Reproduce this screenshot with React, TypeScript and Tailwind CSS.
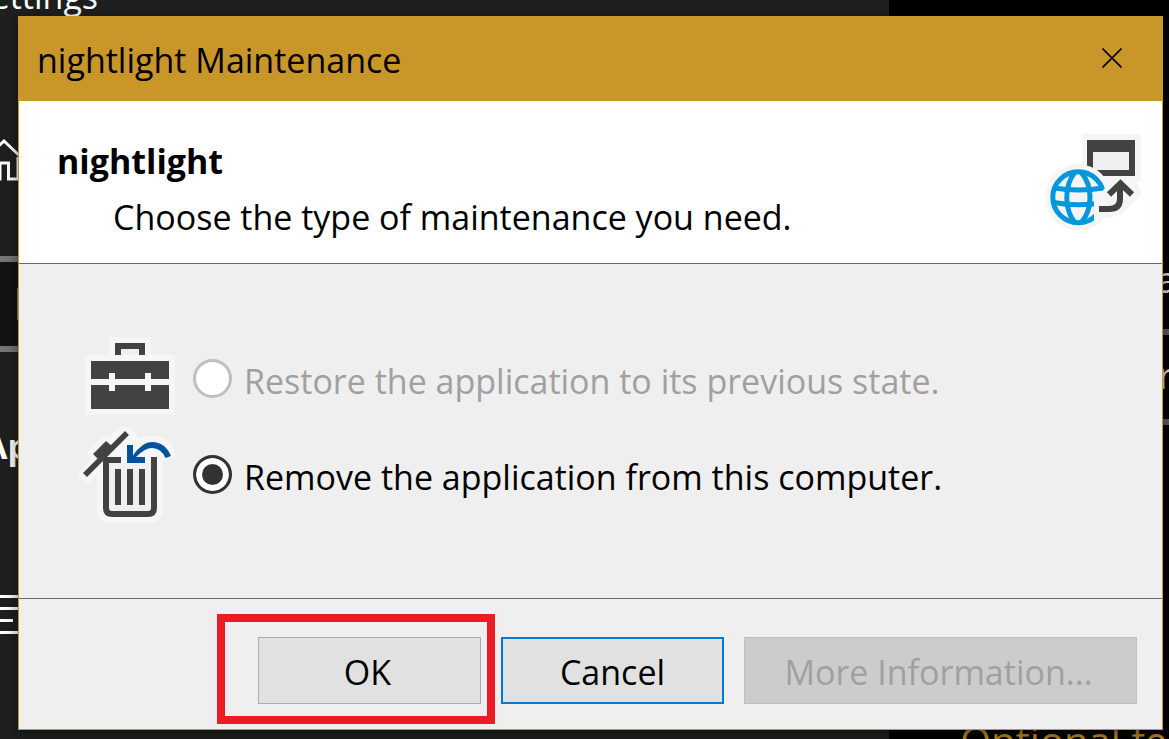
import React from "react";

function HomeGlyph() {
  return (
    <svg viewBox="0 0 40 44" className="h-11 w-10" fill="none" stroke="#fff" strokeWidth="3" aria-hidden="true">
      <path d="M1 21 L20 3 L39 21" />
      <path d="M6 19 V41 H16 V25 H24.5 V41 H34 V19" />
    </svg>
  );
}

function ListGlyph() {
  return (
    <svg viewBox="0 0 40 40" className="h-10 w-10" stroke="#fff" strokeWidth="3" aria-hidden="true">
      <path d="M0 2.5 H40 M0 14.5 H40 M0 26.5 H29 M0 38.5 H40" />
    </svg>
  );
}

function Desktop() {
  return (
    <div className="absolute inset-0 overflow-hidden bg-black text-white" aria-hidden="true">
      <div className="absolute inset-y-0 left-0 w-[889px] bg-[#1f1f1f]" />
      <div className="absolute -left-7 -top-6 text-[34px] leading-10">Settings</div>
      <div className="absolute -left-4 top-[138px]">
        <HomeGlyph />
      </div>
      <div className="absolute left-0 top-64 h-24 w-8 border-y-[6px] border-[#767676] bg-[#141414]" />
      <div className="absolute left-[17px] top-72 h-8 w-1 bg-[#8a7a5a]" />
      <div className="absolute -left-4 top-[426px] text-[34px] font-bold leading-10">Apps</div>
      <div className="absolute -left-4 top-[594px]">
        <ListGlyph />
      </div>
      <div className="absolute right-[-8px] top-[260px] text-[36px] leading-10 text-[#dddddd]">a</div>
      <div className="absolute right-0 top-[329px] h-24 w-8 border-y-[6px] border-[#5c5c5c]" />
      <div className="absolute right-[-4px] top-[356px] text-[36px] leading-10 text-[#dddddd]">r</div>
      <div className="absolute left-[960px] top-[721px] whitespace-nowrap text-[40px] leading-10 text-[#bd8b22]">
        Optional features
      </div>
    </div>
  );
}

function PublishIcon() {
  return (
    <svg viewBox="15 114 96 98" className="h-[98px] w-24 shrink-0" aria-hidden="true">
      <clipPath id="globe-cut">
        <path d="M15 140 H71 L75 168 L72 171 H69 L64 176 V212 H15 Z" />
      </clipPath>
      <path
        d="M52 114 H111 V161 L106 162 L111 171 V175 L96 190 Q92 196 80 197 Q72 198 67 203 Q59 210 47 210 A32 32 0 1 1 52 144 Z"
        fill="#f5f5f5"
      />
      <path d="M57 120 H105 V156 H57 Z" fill="#424242" />
      <path d="M63 132 H99 V150 H63 Z" fill="#f0eff1" />
      <circle cx="48.3" cy="177.3" r="33" fill="#f5f5f5" />
      <g fill="none" stroke="#0097dc" strokeWidth="5" clipPath="url(#globe-cut)">
        <circle cx="48.3" cy="177.3" r="25.5" />
        <path d="M45 152 C34 166 34 189 45 203 M51 152 C63 166 63 189 51 203" />
        <path d="M24 168 Q48 172 74 168 M24 182.500 Q48 187 74 182.500" />
      </g>
      <path d="M69 189 H79 Q90 189 90 179 V164 M79 174.500 L90.500 163.500 L102 174.500" fill="none" stroke="#424242" strokeWidth="6" />
    </svg>
  );
}

function ToolboxIcon() {
  return (
    <svg viewBox="9 1 96 96" className="h-24 w-24 shrink-0" aria-hidden="true">
      <path d="M39 7 H81 V25 H105 V85 H15 V25 H39 Z" fill="#f6f6f6" />
      <path d="M45 25 V13 H75 V25 H69 V19 H51 V25 Z" fill="#424242" />
      <path d="M21 31 H99 V49 H81 V43 H75 V49 H45 V43 H39 V49 H21 Z" fill="#424242" />
      <path d="M21 55 H39 V61 H45 V55 H75 V61 H81 V55 H99 V79 H21 Z" fill="#424242" />
      <path d="M51 19 H69 V25 H51 Z" fill="#f0eff1" />
    </svg>
  );
}

function TrashIcon() {
  return (
    <svg viewBox="9 97 96 96" className="h-24 w-24 shrink-0" aria-hidden="true">
      <path
        d="M51 97 H60 L67 104 V109 Q88 101 101 113 L105 123 V127 L93 132 V181 Q92 191 82 193 H38 Q28 191 27 181 V144 L17 155 L9 147 V142 L21 129 L16 124 L33 106 L38 107 Z"
        fill="#f6f6f6"
      />
      <path d="M39 133 H81 V181 H39 Z" fill="#f0eff1" />
      <path d="M36 127 V178 Q36 184 42 184 H78 Q84 184 84 178 V127" fill="none" stroke="#424242" strokeWidth="6" />
      <path d="M33 127 H51 V133 H33 Z" fill="#424242" />
      <path d="M45 139 H51 V175 H45 Z M57 139 H63 V175 H57 Z M69 139 H75 V175 H69 Z" fill="#424242" />
      <path d="M55 101 L59 105 L17 147 L13 143 Z M23 124 L36 111 L43 117 L29 130 Z" fill="#424242" />
      <path d="M57 115 H63 V125.500 Q72 112 82 112 Q95 112 101 126 L95.500 128 Q91 118 82 118 Q75 118 66 127 H75 V133 H57 Z" fill="#00539c" />
    </svg>
  );
}

function Choice({ id, label, icon, disabled, checked }: {
  id: string;
  label: string;
  icon: React.ReactNode;
  disabled?: boolean;
  checked?: boolean;
}) {
  return (
    <div className="flex items-center">
      {icon}
      <input
        id={id}
        type="radio"
        name="maintenance"
        disabled={disabled}
        defaultChecked={checked}
        className="mb-0.5 ml-[18px] size-[39px] shrink-0 appearance-none rounded-full border-3 border-[#333333] bg-white checked:bg-[#333333] checked:shadow-[inset_0_0_0_6px_white] disabled:border-[#bfbfbf]"
      />
      <label htmlFor={id} className={disabled ? "pl-3 pt-1 text-[#a0a0a0]" : "pl-3 pt-1"}>
        {label}
      </label>
    </div>
  );
}

export default function App() {
  return (
    <div className="relative min-h-screen overflow-hidden pb-[9px] pl-[18px] pr-1.5 pt-4 font-['Open_Sans','Noto_Sans',sans-serif]">
      <Desktop />
      <main className="relative border border-[#c99629] bg-[#efefef] text-[34px] leading-12 text-black shadow-[0_4px_14px_rgba(0,0,0,0.5)]">
        <header className="flex h-21 items-center justify-between bg-[#c99629] pl-[18px] pr-10">
          <h1 className="pt-0.5">nightlight Maintenance</h1>
          <button type="button" aria-label="Close" className="mb-0.5 flex size-5">
            <svg viewBox="0 0 20 20" className="size-5" stroke="#000" strokeWidth="1.6" aria-hidden="true">
              <path d="M0.500 0.500 L19.500 19.500 M19.500 0.500 L0.500 19.500" />
            </svg>
          </button>
        </header>
        <section className="flex h-[162px] items-start justify-between bg-white pl-[38px] pr-[21px] pt-[33px]">
          <div className="pt-[3px]">
            <h2 className="font-bold">nightlight</h2>
            <p className="pl-14 pt-2">Choose the type of maintenance you need.</p>
          </div>
          <PublishIcon />
        </section>
        <fieldset className="border-t border-[#6b6b6b] pb-[75px] pl-[60px] pt-[67px]">
          <Choice id="restore" label="Restore the application to its previous state." icon={<ToolboxIcon />} disabled />
          <Choice id="remove" label="Remove the application from this computer." icon={<TrashIcon />} checked />
        </fieldset>
        <footer className="flex justify-end gap-5 border-t border-[#6b6b6b] pb-[25px] pr-[25px] pt-[38px]">
          <div className="relative flex">
            <button type="button" className="h-[67px] w-[223px] border border-[#adadad] bg-[#e1e1e1] pr-1 pt-0.5">OK</button>
            <div className="pointer-events-none absolute -bottom-5 -left-[41px] -right-3.5 -top-[23px] border-8 border-[#ed1c24]" />
          </div>
          <button type="button" className="h-[67px] w-[223px] border-2 border-[#0078d7] bg-[#e1e1e1] pt-0.5">Cancel</button>
          <button type="button" disabled className="h-[67px] w-[393px] border border-[#bfbfbf] bg-[#cccccc] pr-1 pt-0.5 text-[#a0a0a0]">
            More Information...
          </button>
        </footer>
      </main>
    </div>
  );
}
